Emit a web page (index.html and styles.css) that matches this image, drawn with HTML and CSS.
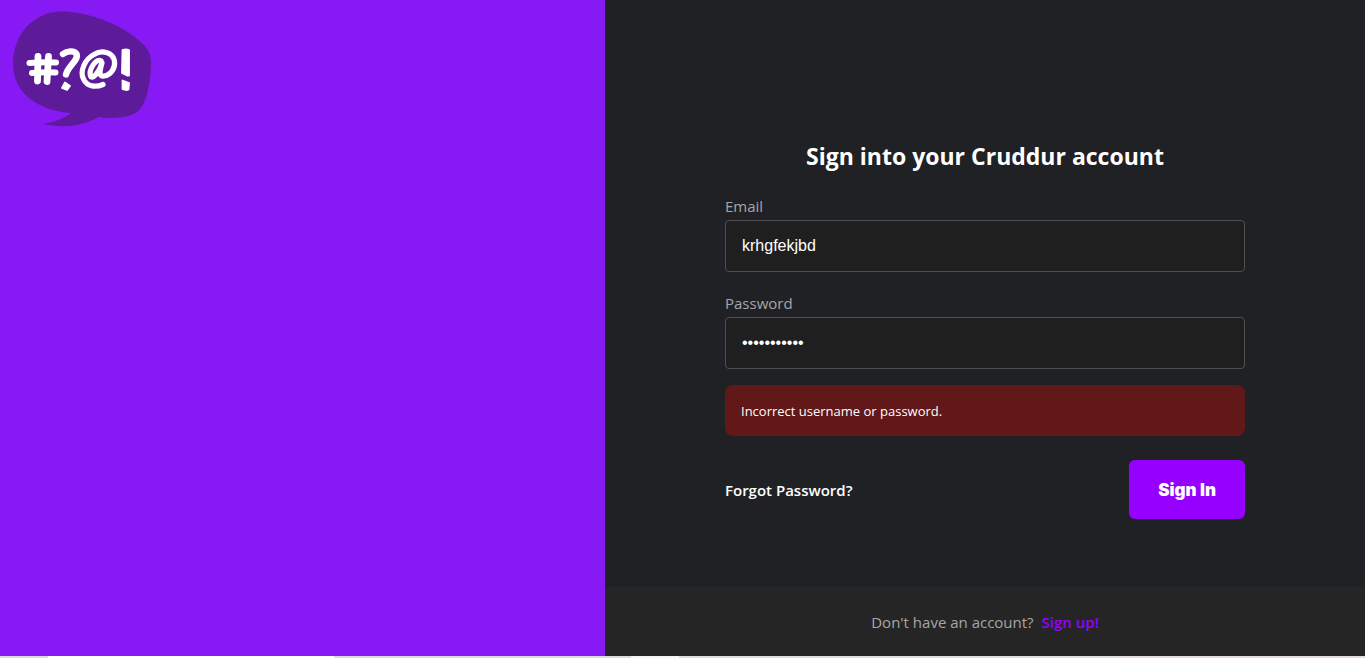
FILE: index.html
```html
<!DOCTYPE html>
<html lang="en">
<head>
  <meta charset="utf-8">
  <meta name="viewport" content="width=device-width, initial-scale=1">
  <title>Cruddur - Sign in</title>
  <link rel="stylesheet" href="styles.css">
</head>
<body>
  <main class="signin">
    <aside class="brand">
      <svg class="logo" viewBox="0 0 140 116" role="img" aria-label="Cruddur">
        <g transform="translate(-12 -11)">
          <path fill="#5d1b9a" d="M62 11.500C34 11.500 13 34 13 64C13 94 40 111 71 113C63 119 53 123 43 123.500C62 129 82 126 99 117C113 119 128 118 137 112C145 107 151 86 151 62C151 52 146 46 136 38C116 22 85 11.500 62 11.500Z"/>
          <g fill="none" stroke="#fff" stroke-linecap="round" stroke-linejoin="round">
            <g stroke-width="6.800">
              <path d="M38 56.500L37.500 81"/>
              <path d="M48.500 56.500L47 81.500"/>
              <path stroke-width="6" d="M29.500 63Q42 62 56 62.500"/>
              <path stroke-width="6" d="M32 73Q43 72 55.500 72.500"/>
            </g>
            <path stroke-width="6.400" d="M63 54C67 51 74 50 76.500 54C79 60 68 66 66 74.500"/>
            <path stroke-width="5.200" d="M101 61C96 57.500 88.500 70 90.500 76C92 80 99 73 102 63C100 70 98 77 104 76C111 75 115.500 68 114.500 61C112.500 52 102 49.500 94 54.500C85 59 79.500 71 83.500 79C87 87 96 87.500 103 84.500"/>
          </g>
          <path fill="#fff" stroke="#fff" stroke-width="1.800" stroke-linejoin="round" d="M65 82.500L70 86L67 90L62 88ZM122.500 50Q126 49 129 50L129 75.500L127 75.500L122 73ZM122.500 80.500L129 83L128.500 89.500L127 90L122.500 89Z"/>
        </g>
      </svg>
    </aside>
    <section class="panel">
      <form class="form">
        <h1 class="title">Sign into your Cruddur account</h1>
        <div class="field">
          <label for="email">Email</label>
          <input id="email" type="text" value="krhgfekjbd">
        </div>
        <div class="field">
          <label for="password">Password</label>
          <input id="password" type="password" value="swordfish12">
        </div>
        <div class="error" role="alert">Incorrect username or password.</div>
        <div class="actions">
          <a class="forgot" href="#forgot">Forgot Password?</a>
          <button class="submit" type="submit">Sign In</button>
        </div>
      </form>
      <div class="signup">
        <span>Don't have an account?</span>
        <a href="#signup">Sign up!</a>
      </div>
    </section>
  </main>
  <div class="edge"><span class="edge-wide"></span><span class="edge-small"></span></div>
</body>
</html>
```
FILE: styles.css
```css
* {
  box-sizing: border-box;
}

body {
  display: flex;
  flex-direction: column;
  min-height: 100vh;
  margin: 0;
  background: #202124;
  color: #fff;
  font: 16px/24px "Segoe UI", "Open Sans", sans-serif;
}

.signin {
  display: grid;
  flex: 1;
  grid-template-columns: 605fr 760fr;
}

.brand {
  padding: 11px 12px;
  background: #8719f4;
}

.logo {
  display: block;
  width: 140px;
}

.panel {
  display: flex;
  flex-direction: column;
}

.form {
  display: flex;
  flex: 1;
  flex-direction: column;
  justify-content: center;
  width: 100%;
  max-width: 520px;
  margin: 0 auto;
  padding-top: 72px;
}

.title {
  margin: 0 0 22px;
  font-size: 23px;
  font-weight: 700;
  line-height: 32px;
  text-align: center;
}

.field {
  display: flex;
  flex-direction: column;
  margin-bottom: 19px;
}

.field label {
  margin-bottom: 2px;
  color: #a6a6a7;
  font-size: 15px;
}

.field input {
  height: 52px;
  padding: 0 16px;
  border: 1px solid #4f4f50;
  border-radius: 4px;
  outline: none;
  background: #1f1f1f;
  color: #fff;
  font: 16px "Liberation Sans", Arial, sans-serif;
}

.error {
  margin-top: -3px;
  padding: 14px 16px 13px;
  border-radius: 8px;
  background: #621719;
  font-size: 13px;
}

.actions {
  display: flex;
  align-items: center;
  justify-content: space-between;
  margin-top: 24px;
}

.forgot {
  color: #fff;
  font-size: 15px;
  font-weight: 600;
  text-decoration: none;
}

.submit {
  padding: 18px 29px 17px;
  border: 0;
  border-radius: 6px;
  background: #9500ff;
  color: #fff;
  font: 900 17px/24px "Arial Black", Inter, sans-serif;
}

.signup {
  display: flex;
  justify-content: center;
  gap: 8px;
  padding: 23px 16px 22px;
  background: #252525;
  color: #a6a6a7;
  font-size: 15px;
}

.signup a {
  color: #9500ff;
  font-weight: 600;
  text-decoration: none;
}

.edge {
  display: flex;
  gap: 297px;
  height: 2px;
  padding-left: 48px;
  background: linear-gradient(90deg, #dadada, #e6dada);
}

.edge-wide {
  width: 286px;
  background: #fff;
}

.edge-small {
  width: 48px;
  background: #f6f4f4;
}
```
